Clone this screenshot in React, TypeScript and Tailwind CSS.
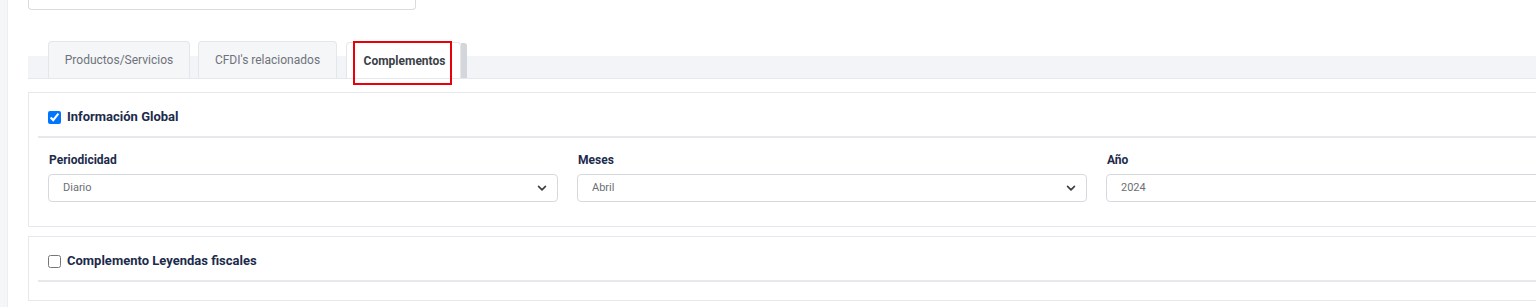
import React from "react";

function Chevron() {
  return (
    <svg width="10" height="10" viewBox="0 0 16 16" className="shrink-0">
      <path d="M2.5 5.5 L8 11 L13.5 5.5" fill="none" stroke="#3a3f45" strokeWidth="2.6" strokeLinecap="round" strokeLinejoin="round" />
    </svg>
  );
}

function Field({ label, value, select }: { label: string; value: string; select?: boolean }) {
  return (
    <div className="flex flex-col">
      <div className="h-[14px] text-[12px] leading-[14px] font-bold text-[#1c2b4b] pl-[1px]">{label}</div>
      <div className="mt-[7px] h-[28px] border border-[#d6d9dd] rounded-[4px] flex items-center justify-between pl-[14px] pr-[10px] bg-white">
        <span className="text-[11px] text-[#6b6f75]">{value}</span>
        {select && <Chevron />}
      </div>
    </div>
  );
}

export default function App() {
  return (
    <div className="flex w-[1536px] h-[307px] overflow-hidden bg-white" style={{ fontFamily: "Roboto, 'Liberation Sans', sans-serif" }}>
      <div className="w-[8px] shrink-0 bg-[#f5f6f8] border-r border-[#eceef1]" />
      <div className="flex-1 overflow-hidden">
        <div className="w-[1608px] ml-[20px]">
          <div className="w-[388px] h-[10px] border border-t-0 border-[#d9dcdf] rounded-b-[4px]" />
          <div className="mt-[31px] h-[38px] border-b border-[#e6e8eb] flex items-end pl-[20px] bg-[linear-gradient(to_bottom,white_15px,#f3f4f7_15px)]">
            <div className="w-[142px] h-[37px] border border-b-0 border-[#e3e6ea] rounded-t-[4px] bg-[#f5f6f8] flex items-center justify-center text-[12px] text-[#6e737b]">
              Productos/Servicios
            </div>
            <div className="ml-[8px] w-[139px] h-[37px] border border-b-0 border-[#e3e6ea] rounded-t-[4px] bg-[#f5f6f8] flex items-center justify-center text-[12px] text-[#6e737b]">
              CFDI's relacionados
            </div>
            <div className="ml-[9px] flex items-end">
              <div className="relative w-[115px] h-[36px] border border-b-0 border-[#e3e6ea] rounded-t-[4px] bg-white flex items-center justify-center text-[12px] font-bold text-[#3b3f46] pl-[2px]">
                Complementos
                <div className="absolute left-[6px] top-[-2px] w-[99px] h-[44px] border-2 border-[#e8000b]" />
              </div>
              <div className="w-[6px] h-[35px] bg-[#d3d6da] rounded-tr-[3px]" />
            </div>
          </div>

          <div className="mt-[13px] border border-[#e6e8eb] bg-white">
            <div className="px-[19px] pt-[14px] pb-[9px] flex items-center gap-[6px]">
              <input type="checkbox" defaultChecked className="w-[13px] h-[13px] m-0" />
              <span className="text-[13px] font-bold text-[#1c2b4b] leading-[20px]">Información Global</span>
            </div>
            <div className="mx-[9px] h-[2px] bg-[#e6e8ec]" />
            <div className="grid grid-cols-3 gap-[19px] px-[19px] pt-[15px] pb-[24px]">
              <Field label="Periodicidad" value="Diario" select />
              <Field label="Meses" value="Abril" select />
              <Field label="Año" value="2024" />
            </div>
          </div>

          <div className="mt-[9px] border border-[#e6e8eb] bg-white">
            <div className="px-[19px] pt-[14px] pb-[9px] flex items-center gap-[6px]">
              <input type="checkbox" className="w-[13px] h-[13px] m-0" />
              <span className="text-[13px] font-bold text-[#1c2b4b] leading-[20px]">Complemento Leyendas fiscales</span>
            </div>
            <div className="mx-[9px] h-[2px] bg-[#e6e8ec]" />
            <div className="h-[18px]" />
          </div>
        </div>
      </div>
    </div>
  );
}
